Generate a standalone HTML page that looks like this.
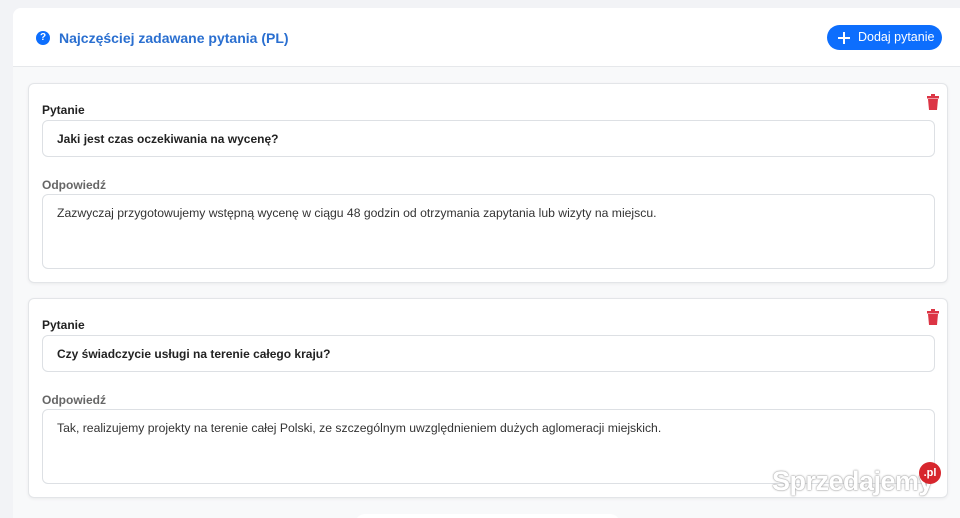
<!DOCTYPE html>
<html><head><meta charset="utf-8"><style>
*{box-sizing:border-box;margin:0;padding:0}
html,body{width:960px;height:518px;overflow:hidden}
body{background:#f2f3f6;font-family:"Liberation Sans",sans-serif;position:relative}
.main{position:absolute;left:13px;top:8px;width:947px;height:510px;background:#f8f9fa;border-radius:8px 0 0 0;overflow:hidden}
.hdr{height:59px;background:#fff;border-bottom:1px solid #e6e8eb;position:relative}
.ttl{position:absolute;left:23px;top:22px;font-size:14px;font-weight:bold;color:#2a6fd0;display:flex;align-items:center}
.q{width:14px;height:14px;border-radius:50%;background:#0d6efd;color:#fff;font-size:10px;text-align:center;line-height:14px;margin-right:9px}
.btn{position:absolute;left:814px;top:17px;width:115px;height:25px;border-radius:13px;background:#0d6efd;color:#fff;font-size:12.5px;line-height:25px;padding-left:31px}
.btn:before{content:"";position:absolute;left:11px;top:12px;width:12px;height:2px;background:#fff}
.btn:after{content:"";position:absolute;left:16px;top:7px;width:2px;height:12px;background:#fff}
.card{position:absolute;left:28px;width:920px;height:200px;background:#fff;border:1px solid #e3e5e8;border-radius:6px;box-shadow:0 1px 3px rgba(0,0,0,.06)}
.lab{position:absolute;left:13px;font-size:12px;font-weight:bold;color:#222}
.lab.g{color:#666}
.in{position:absolute;left:13px;width:893px;height:37px;border:1px solid #dde0e4;border-radius:6px;padding:11px 14px;font-size:12px;font-weight:bold;color:#222}
.ta{position:absolute;left:13px;width:893px;height:75px;border:1px solid #dde0e4;border-radius:6px;padding:11px 14px;font-size:12.2px;color:#333}
.tr{position:absolute;right:8px;top:10px;width:12px;height:16px}
.wm{position:absolute;left:772px;top:466px;font-size:27px;font-weight:bold;color:#fff;text-shadow:0 0 2px #999,0 0 1px #888;letter-spacing:-0.5px}
.pl{position:absolute;left:919px;top:462px;width:22px;height:22px;border-radius:50%;background:#d7262d;color:#fff;font-size:11px;font-weight:bold;text-align:center;line-height:22px}
</style></head><body>
<div class="main">
<div class="hdr"><div class="ttl"><span class="q">?</span>Najczęściej zadawane pytania (PL)</div><div class="btn">Dodaj pytanie</div></div>
</div>
<div class="card" style="top:83px">
<svg class="tr" viewBox="0 0 12 16"><rect x="0" y="2" width="12" height="2.5" fill="#dc3545"/><rect x="4" y="0" width="4" height="3" fill="#dc3545"/><path d="M1 5h10l-1 11H2z" fill="#dc3545"/></svg>
<div class="lab" style="top:19px">Pytanie</div>
<div class="in" style="top:36px">Jaki jest czas oczekiwania na wycenę?</div>
<div class="lab g" style="top:94px">Odpowiedź</div>
<div class="ta" style="top:110px">Zazwyczaj przygotowujemy wstępną wycenę w ciągu 48 godzin od otrzymania zapytania lub wizyty na miejscu.</div>
</div>
<div class="card" style="top:298px">
<svg class="tr" viewBox="0 0 12 16"><rect x="0" y="2" width="12" height="2.5" fill="#dc3545"/><rect x="4" y="0" width="4" height="3" fill="#dc3545"/><path d="M1 5h10l-1 11H2z" fill="#dc3545"/></svg>
<div class="lab" style="top:19px">Pytanie</div>
<div class="in" style="top:36px">Czy świadczycie usługi na terenie całego kraju?</div>
<div class="lab g" style="top:94px">Odpowiedź</div>
<div class="ta" style="top:110px">Tak, realizujemy projekty na terenie całej Polski, ze szczególnym uwzględnieniem dużych aglomeracji miejskich.</div>
</div>
<div style="position:absolute;left:355px;top:514px;width:265px;height:10px;background:#fff;border-radius:10px 10px 0 0"></div>
<div class="wm">Sprzedajemy</div><div class="pl">.pl</div>
</body></html>
